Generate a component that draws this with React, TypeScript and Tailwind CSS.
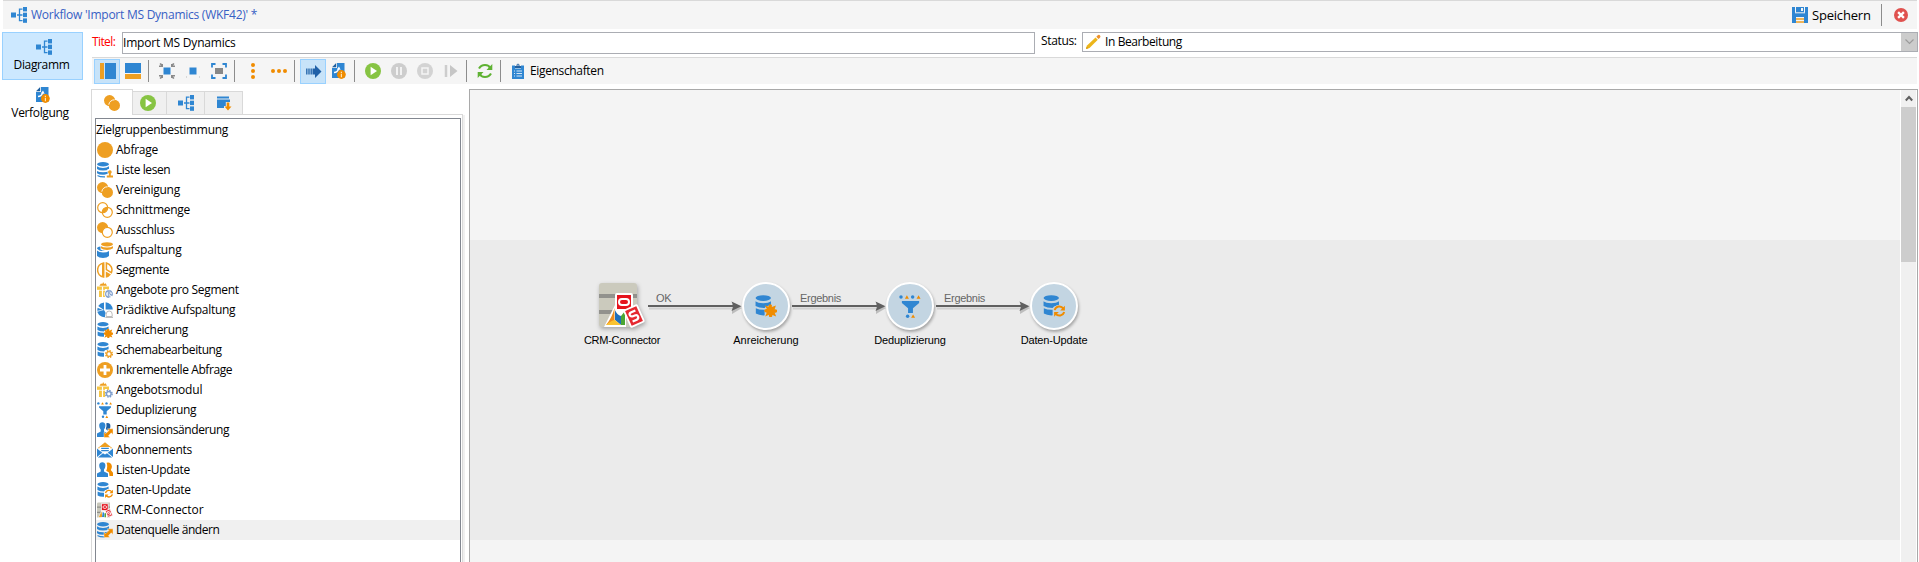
import type { ReactNode } from "react";

const B = "#2f86d2";
const O = "#ee9f22";
const D = "#f08c00";

function Svg({ children, size = 16, className = "" }: { children: ReactNode; size?: number; className?: string }) {
  return (
    <svg width={size} height={size} viewBox="0 0 16 16" fill="none" className={"shrink-0 " + className}>
      {children}
    </svg>
  );
}

const Db = () => (
  <g fill={B}>
    <ellipse cx="6" cy="2.3" rx="6" ry="2.2" />
    <path d="M0 4.300Q2 6 6 6T12 4.300V7Q10 8.600 6 8.600T0 7Z" />
    <path d="M0 8.900Q2 10.300 6 10.300T12 8.900V11.200Q10 12.700 6 12.700T0 11.200Z" />
    <path d="M.5 13.100Q3 14.400 8 14.300V15.600Q3 15.800.5 14.300Z" />
  </g>
);
const DbSmall = () => (
  <g fill={B}>
    <ellipse cx="6" cy="2.200" rx="5.600" ry="2.100" />
    <path d="M.4 4.600Q2 6 6 6T11.600 4.600V7.300L8 8.300 7 9.500Q3 9.500.4 8Z" />
    <path d="M.6 9.600Q3 10.900 7 10.800V14.800Q3 15 .6 13.500Z" />
  </g>
);
const Org = () => (
  <g fill={B}>
    <rect x="0" y="5.5" width="5" height="5" />
    <rect x="12" y="0" width="4" height="4.4" />
    <rect x="12" y="5.7" width="4" height="4.4" />
    <rect x="12" y="11.4" width="4" height="4.4" />
    <path d="M6 8H11.500M11.500 2.200H8.500V13.600H11.500" stroke={B} strokeWidth="1.300" fill="none" />
  </g>
);
const Gear = ({ color = O, x = 12, y = 12 }: { color?: string; x?: number; y?: number }) => (
  <g>
    <circle cx={x} cy={y} r="3.3" stroke={color} strokeWidth="1.5" strokeDasharray="1.5 1.09" fill="#fff" />
    <circle cx={x} cy={y} r="2.3" stroke={color} strokeWidth="1.3" fill="#fff" />
  </g>
);
const Person = () => (
  <path d="M2.2 3.3C2.2 1 3.6.2 5.3.2S8.4 1 8.4 3.3C8.4 5.5 7.6 6.8 7 7.6V9.6L11 11.6V15H0V11.6L3.7 9.6V7.6C3 6.8 2.2 5.5 2.2 3.3Z" fill={B} />
);
const Swap = () => (
  <path d="M10.300 6.800H16V12.500L14.300 10.800 11.400 13.700 13 15.500H7V9.900L8.800 11.600 11.900 8.500Z" fill={D} stroke="#fff" strokeWidth=".4" />
);
const Gift = () => (
  <g>
    <path d="M0 4.6H12V8H10V7H8V15H2V8H0Z" fill="#f6c544" />
    <path d="M5.5 4.6V15" stroke="#fff" strokeWidth="1.2" />
    <path d="M2.3 3.8L4 1.4 5.2 2 6.2 0 7.2 2 8.6 1.2 10 3.8Z" fill={O} />
    <path d="M0 8.3H12" stroke="#fff" strokeWidth=".8" />
  </g>
);
const Refresh = ({ bg = "#fff" }: { bg?: string }) => (
  <g stroke={D} strokeWidth="1.4">
    <circle cx="12" cy="11.700" r="4.700" fill={bg} stroke="none" />
    <path d="M8.500 11A3.500 3.500 0 0 1 14.800 9.900M15.400 12.400A3.500 3.500 0 0 1 9.200 13.500" />
    <path d="M15.900 7.800V11.300H12.500ZM8.100 15.900V12.400H11.500Z" fill={D} stroke="none" />
  </g>
);
const Puzzle = () => (
  <path d="M7.200 7.400L9.900 8.600Q9.600 6.600 11.200 6.700T12.200 8.800L15.200 7.600 14.300 10.300Q16.200 10.200 16.100 11.700T14.300 12.900L15.400 15.600 12.700 14.600Q12.600 16.300 11.200 16.200T10.200 14.400L7.400 15.700 8.500 12.900Q6.600 12.800 6.700 11.400T8.600 10.200Z" fill={D} />
);
const Funnel = () => (
  <g fill={B}>
    <circle cx="1.4" cy="1.4" r="1.2" />
    <circle cx="9.5" cy="1.4" r="1.2" />
    <path d="M4.1 2.6L5.5.2 6.9 2.6ZM12.2 2.6L13.6.2 15 2.6ZM8.4 15.9L9.8 13.5 11.2 15.9Z" fill={D} />
    <path d="M2 4.2H14V5.6L9.7 9.2V12.6H6.3V9.2L2 5.6Z" />
    <circle cx="6" cy="14.8" r="1.2" />
  </g>
);
const Crm = () => (
  <g>
    <path d="M0 1.6Q0 .4 1.2.4H13V15.4H0Z" fill="#c9c8bb" />
    <path d="M0 4.6H13V5.8H0ZM0 9.8H13V11H0Z" fill="#8f8f8a" />
    <path d="M1.200 15.800L4.800 7.800 10 9.500V15.800Z" fill="#fff" />
    <path d="M1.800 15.200L4.600 9.200 5.200 15Z" fill={O} />
    <path d="M5 15L5.800 9.500 7.400 11.500V15Z" fill={B} />
    <path d="M7.600 15.200V12L9 10.500V15.200Z" fill="#5ba832" />
    <rect x="4.500" y="1.800" width="6.600" height="6.600" fill="#e3121c" stroke="#fff" strokeWidth=".7" />
    <rect x="6.100" y="3.800" width="3.400" height="2.500" rx="1" stroke="#fff" strokeWidth=".9" />
    <g transform="rotate(-22 12 11)">
      <rect x="9.500" y="7.600" width="5" height="7" fill="#e3252c" stroke="#fff" strokeWidth=".7" />
      <path d="M13.500 9.400H10.900V11.100H13.200V12.900H10.500" stroke="#fff" strokeWidth=".9" />
    </g>
  </g>
);
const DocInfo = () => (
  <g>
    <path d="M5 0H12.500V15H0V5H5Z" fill={B} />
    <path d="M0 4.200L4.200 0V4.200Z" fill="#1e5f9f" />
    <path d="M2 9.500Q5.500 9.500 6.500 6" stroke="#fff" strokeWidth="1.300" />
    <path d="M4.800 6.400L7 3.400 8.600 6.700Z" fill="#fff" />
    <circle cx="9.400" cy="11.500" r="4.400" fill={D} />
    <path d="M9.400 8.700V9.900M9.400 10.800V14.200" stroke="#ffe3b3" strokeWidth="1.200" />
  </g>
);
const Union = () => (
  <g>
    <circle cx="5.6" cy="5.6" r="5.6" fill={O} />
    <circle cx="10.4" cy="10.4" r="5.6" fill={O} />
    <path d="M4.8 9.7A5.6 5.6 0 0 1 10.6 4.8" stroke="#fff" strokeWidth=".9" />
  </g>
);
const Play = () => (
  <g>
    <circle cx="8" cy="8" r="8" fill="#87c443" />
    <path d="M5.6 3.8L12 8 5.6 12.2Z" fill="#fff" />
  </g>
);

const ITEMS: { label: string; icon: ReactNode; track: string }[] = [
  { label: "Abfrage", track: "tracking-[-0.25px]", icon: <circle cx="8" cy="8" r="8" fill={O} /> },
  {
    label: "Liste lesen",
    track: "tracking-[-0.4px]",
    icon: (
      <g>
        <Db />
        <path d="M8.6 16V12.2H10.6V7H16V16Z" fill="#fff" />
        <path d="M12.8 8.2A1.9 1.9 0 0 1 13.8 11.7V13.4H16V15.4H9.8V13.4H11.9V11.7A1.9 1.9 0 0 1 12.8 8.2Z" fill={O} />
      </g>
    ),
  },
  { label: "Vereinigung", track: "tracking-[-0.25px]", icon: <Union /> },
  {
    label: "Schnittmenge",
    track: "tracking-[-0.25px]",
    icon: (
      <g>
        <path d="M5.2 10.6A5.2 5.2 0 0 1 10.6 5.2 5.2 5.2 0 0 1 5.2 10.6Z" fill={O} />
        <circle cx="5.7" cy="5.7" r="5" stroke={O} strokeWidth="1.2" />
        <circle cx="10.3" cy="10.3" r="5" stroke={O} strokeWidth="1.2" />
      </g>
    ),
  },
  {
    label: "Ausschluss",
    track: "tracking-[-0.3px]",
    icon: (
      <g>
        <circle cx="5.6" cy="5.6" r="5.6" fill={O} />
        <circle cx="10.3" cy="10.3" r="5" stroke={O} strokeWidth="1.2" fill="#fff" />
      </g>
    ),
  },
  {
    label: "Aufspaltung",
    track: "tracking-[-0.15px]",
    icon: (
      <g>
        <path d="M0 8.500Q2 10.500 6 10.500T12 9V14Q10 16 6 16T0 14Z" fill={B} />
        <path d="M0 6.500Q0 5 3.500 4.600V7.400Q5 8.600 8 9Q2 9.500 0 6.500Z" fill={B} />
        <ellipse cx="10" cy="2.300" rx="6" ry="2.100" fill={O} />
        <path d="M4 4.200Q6 5.600 10 5.600T16 4.200V6.200Q14 7.900 10 7.900T4 6.200Z" fill={O} />
      </g>
    ),
  },
  {
    label: "Segmente",
    track: "tracking-[-0.35px]",
    icon: (
      <g>
        <path d="M6.600.9A7.200 7.200 0 0 0 6.600 15.100Z" stroke={O} strokeWidth="1.500" />
        <path d="M5 1.500H7.200V14.500H5Z" fill={O} />
        <path d="M9.400.9A7.200 7.200 0 0 1 14.400 10.600L9.400 7.600Z" stroke={O} strokeWidth="1.500" />
        <path d="M8.800 9.400L14 12.500Q12 15.200 8.800 15.800Z" fill={O} />
      </g>
    ),
  },
  {
    label: "Angebote pro Segment",
    track: "tracking-[-0.3px]",
    icon: (
      <g>
        <Gift />
        <circle cx="11.8" cy="12" r="4.6" fill="#fff" />
        <path d="M11.3 8.6A3.5 3.5 0 0 0 11.3 15.4ZM12.8 8.6A3.5 3.5 0 0 1 15 13.4L12.8 12ZM12.8 13.4V15.5" stroke="#7d9dcc" strokeWidth="1.1" />
      </g>
    ),
  },
  {
    label: "Prädiktive Aufspaltung",
    track: "tracking-[-0.3px]",
    icon: (
      <g>
        <path d="M7 .4V8L11 14.4A7.8 7.8 0 0 1 .2 9.8L7 8 1.2 4A8 8 0 0 1 7 .4Z" fill={B} />
        <path d="M.6 5.800L5.800 8 .2 8.800Z" fill={B} />
        <path d="M8.6.3A7.8 7.8 0 0 1 15.8 7.6H8.6Z" fill={B} />
        <path d="M8 16V13.5L9 9.5 12.5 8 16 10V16Z" fill="#fff" />
        <path d="M9.2 14.5V12.2A3 3.2 0 0 1 15.2 12.2V14.5ZM8.4 15.5H16" stroke="#b5b5b5" strokeWidth=".9" />
      </g>
    ),
  },
  { label: "Anreicherung", track: "tracking-[-0.3px]", icon: <g><DbSmall /><Puzzle /></g> },
  { label: "Schemabearbeitung", track: "tracking-[-0.4px]", icon: <g><DbSmall /><Gear /></g> },
  {
    label: "Inkrementelle Abfrage",
    track: "tracking-[-0.4px]",
    icon: (
      <g>
        <circle cx="8" cy="8" r="8" fill={O} />
        <path d="M8 3V13M3 8H13" stroke="#fff" strokeWidth="2.8" />
      </g>
    ),
  },
  { label: "Angebotsmodul", track: "tracking-[-0.2px]", icon: <g><Gift /><Gear color="#7d9dcc" x={11.8} y={11.8} /></g> },
  { label: "Deduplizierung", track: "tracking-[-0.35px]", icon: <Funnel /> },
  {
    label: "Dimensionsänderung",
    track: "tracking-[-0.4px]",
    icon: (
      <g>
        <Person />
        <path d="M9.3 1.2Q13.5.4 13.4 4.2 13.4 6 12.4 7.2L10.5 8.4 8.8 7Q10 4 9.3 1.2Z" fill="#1e5fa3" />
        <Swap />
      </g>
    ),
  },
  {
    label: "Abonnements",
    track: "tracking-[-0.25px]",
    icon: (
      <g>
        <path d="M.6 6.2L8 .2 15.4 6.2Z" fill={O} />
        <path d="M2.6 5H13.4V10L8 13 2.6 10Z" fill="#fff" />
        <path d="M0 6.6L5.3 10.8 0 15ZM16 6.6L10.7 10.8 16 15Z" fill={B} />
        <path d="M.8 15.6L6 11.2 8 12.5 10 11.2 15.2 15.6Z" fill={B} />
        <path d="M4.2 6.4H11.8M4.2 8.6H11.8" stroke={B} strokeWidth="1.1" />
      </g>
    ),
  },
  {
    label: "Listen-Update",
    track: "tracking-[-0.35px]",
    icon: (
      <g>
        <Person />
        <path d="M9.6.8Q14-.2 14.9 4.2 14.9 6.5 13.8 8L16 10.8V14H12.5L12 10.6 9.2 8.8Q11 4.8 9.6.8Z" fill={D} />
      </g>
    ),
  },
  { label: "Daten-Update", track: "tracking-[-0.35px]", icon: <g><DbSmall /><Refresh /></g> },
  { label: "CRM-Connector", track: "tracking-[-0.03px]", icon: <Crm /> },
  { label: "Datenquelle ändern", track: "tracking-[-0.45px]", icon: <g><Db /><Swap /></g> },
];

function Sep({ className = "" }: { className?: string }) {
  return <div className={"h-[22px] w-px shrink-0 bg-[#8c8c8c] " + className} />;
}

function Node({ className, label, track, children }: { className: string; label: string; track: string; children: ReactNode }) {
  return (
    <div className={"absolute flex w-[120px] flex-col items-center " + className}>
      <div className="flex size-[48px] items-center justify-center rounded-full border-2 border-white bg-[#c3d5e2] shadow-[1px_2px_3px_rgba(0,0,0,0.3)]">
        {children}
      </div>
      <span className={"mt-[3px] font-['Liberation_Sans',Arial,sans-serif] text-[11px] leading-[14px] text-black " + track}>{label}</span>
    </div>
  );
}

function Link({ className, label }: { className: string; label: string }) {
  return (
    <div className={"absolute w-[94px] " + className}>
      <span className="block h-[14px] pl-[8px] font-['Liberation_Sans',Arial,sans-serif] text-[11px] leading-[14px] tracking-[-0.3px] text-[#666]">{label}</span>
      <svg width="94" height="14" viewBox="0 0 94 14" className="-mt-[5px] block">
        <path d="M1 8.500H84" stroke="#d0d0d0" strokeWidth="2" />
        <path d="M84 3.500L94 8 84 14Z" fill="#bdbdbd" />
        <path d="M0 6H86" stroke="#606060" strokeWidth="2" />
        <path d="M83.500 1.500L93.500 6.200L83.500 11L85.500 6.200Z" fill="#606060" />
      </svg>
    </div>
  );
}

export default function App() {
  return (
    <div className="flex h-[562px] w-[1919px] flex-col overflow-hidden bg-white font-['Open_Sans','Noto_Sans',sans-serif] text-[12px] leading-[16px] tracking-[-0.1px] text-black">
      <header className="ml-[3px] mr-[2px] flex h-[29px] shrink-0 items-center border-t border-[#d9d9d9] bg-[#f5f5f5]">
        <Svg className="ml-[8px]"><Org /></Svg>
        <span className="ml-[4px] tracking-[-0.25px] text-[#3760c4]">Workflow 'Import MS Dynamics (WKF42)' *</span>
        <div className="ml-auto flex items-center">
          <Svg>
            <path d="M0 0H16V16H0Z" fill={B} />
            <path d="M4 10H12V16H4Z" fill="#f5f5f5" />
            <path d="M3.500 0V5.500M12.500 0V5.500M3 5.800H13" stroke="#f5f5f5" />
            <path d="M9 1H11V4H9Z" fill="#f5f5f5" />
            <path d="M4 12H12M4 15H12" stroke={O} strokeWidth="1.600" />
          </Svg>
          <span className="ml-[4px] w-[60px] text-[13px] tracking-[-0.2px]">Speichern</span>
          <Sep className="ml-[9px]" />
          <Svg size={14} className="ml-[12px] mr-[9px]">
            <circle cx="8" cy="8" r="8" fill="#e0524f" />
            <path d="M4.700 4.700L11.300 11.300M11.300 4.700L4.700 11.300" stroke="#fff" strokeWidth="2.600" />
          </Svg>
        </div>
      </header>
      <div className="flex min-h-0 flex-1">
        <nav className="flex w-[91px] shrink-0 flex-col pl-[2px] pt-[3px] tracking-[-0.35px]">
          <div className="flex h-[48px] w-[81px] flex-col items-center border border-[#99d1ff] bg-[#cce8ff]">
            <Svg className="ml-[3px] mt-[6px]"><Org /></Svg>
            <span className="mr-[2px] mt-[2px]">Diagramm</span>
          </div>
          <div className="flex h-[46px] w-[81px] flex-col items-center">
            <Svg className="ml-[2px] mt-[7px]"><DocInfo /></Svg>
            <span className="mr-[5px] mt-[2px]">Verfolgung</span>
          </div>
        </nav>
        <main className="flex min-w-0 flex-1 flex-col">
          <div className="flex h-[28px] shrink-0 pt-[3px]">
            <span className="w-[31px] pl-px pt-[2px] tracking-[-0.6px] text-[#f00]">Titel:</span>
            <div className="flex h-[22px] w-[913px] items-center border border-[#abadb3] pb-px tracking-[-0.2px]">Import MS Dynamics</div>
            <span className="w-[47px] pl-[6px] pt-px tracking-[-0.35px]">Status:</span>
            <div className="flex h-[20px] w-[836px] items-center border border-[#abadb3]">
              <Svg className="ml-[2px]">
                <path d="M1 15L2 11.500 10.500 3.500 12.800 5.800 4.500 14Z" fill="#ecb51a" />
                <path d="M11.300 2.800L12.500 1.500Q14-.2 15 1.500 16 2.700 14.700 3.900L13.500 5Z" fill="#ee9028" />
                <path d="M1 15L1.600 12.600 3.400 14.300Z" fill="#d89a10" />
              </Svg>
              <span className="ml-[4px] tracking-[-0.4px]">In Bearbeitung</span>
              <div className="ml-auto flex h-[18px] w-[16px] items-center justify-center bg-[#ccc]">
                <svg width="9" height="6" viewBox="0 0 9 6" fill="none"><path d="M.5.5L4.500 4.500 8.500.5" stroke="#9b9b9b" strokeWidth="1.200" /></svg>
              </div>
            </div>
          </div>
          <div className="ml-px mr-[2px] flex h-[27px] shrink-0 items-center border-t border-[#d9d9d9] bg-[#f5f5f5]">
            <div className="ml-[2px] flex h-[25px] w-[26px] items-center justify-center border border-[#99d1ff] bg-[#c7e3f9]">
              <Svg className="ml-px"><path d="M0 0H4V16H0Z" fill={O} /><path d="M5 0H16V16H5Z" fill={B} /></Svg>
            </div>
            <Svg className="ml-[5px]"><path d="M0 0H16V10H0Z" fill={B} /><path d="M0 11H16V16H0Z" fill={O} /></Svg>
            <Sep className="ml-[7px]" />
            <Svg className="ml-[10px]">
              <path d="M4.500 4.500H11.500V11.500H4.500Z" fill={B} />
              <path d="M4 1V4H0V2.500H2L.5 1 1.500 0 3 1ZM12 1V4H16V2.500H14L15.500 1 14.500 0 13 1ZM4 15V12H0V13.500H2L.5 15 1.500 16 3 15ZM12 15V12H16V13.500H14L15.500 15 14.500 16 13 15Z" fill="#8a8a8a" />
            </Svg>
            <Svg className="ml-[10px]"><path d="M4.500 4.500H11.500V11.500H4.500Z" fill={B} /><path d="M1 14H2M14 14H15" stroke="#bbb" /></Svg>
            <Svg className="ml-[10px]">
              <path d="M4 5H12V11H4Z" fill="#888" />
              <path d="M4.500 1H1V4.500M11.500 1H15V4.500M4.500 15H1V11.500M11.500 15H15V11.500" stroke={B} strokeWidth="1.800" />
            </Svg>
            <Sep className="ml-[7px]" />
            <Svg className="ml-[10px]"><g fill={D}><circle cx="8" cy="2" r="2" /><circle cx="8" cy="8" r="2" /><circle cx="8" cy="14" r="2" /></g></Svg>
            <Svg className="ml-[10px]"><g fill={D}><circle cx="2" cy="8" r="2" /><circle cx="8" cy="8" r="2" /><circle cx="14" cy="8" r="2" /></g></Svg>
            <Sep className="ml-[7px]" />
            <div className="ml-[5px] flex h-[25px] w-[26px] items-center justify-center border border-[#99d1ff] bg-[#c7e3f9]">
              <Svg className="ml-[2px]"><path d="M.8 5.500V11.500M3 5.500V11.500M5.200 5.500V11.500" stroke="#2869ad" strokeWidth="1.400" /><path d="M6.500 5.500H9V2L15.500 8.500 9 15V11.500H6.500Z" fill="#2161a8" /></Svg>
            </div>
            <Svg className="ml-[6px]"><DocInfo /></Svg>
            <Sep className="ml-[6px]" />
            <Svg className="ml-[10px]"><Play /></Svg>
            <Svg className="ml-[10px]"><circle cx="8" cy="8" r="8" fill="#cdcdcd" /><path d="M6 4V12M10 4V12" stroke="#f2f2f2" strokeWidth="2" /></Svg>
            <Svg className="ml-[10px]"><circle cx="8" cy="8" r="8" fill="#d3d3d3" /><path d="M5 5H11V11H5Z" stroke="#f5f5f5" strokeWidth="1.500" /></Svg>
            <Svg className="ml-[10px]"><path d="M3 2V14" stroke="#cdcdcd" strokeWidth="2.500" /><path d="M7 2L14.500 8 7 14Z" fill="#c6c6c6" /></Svg>
            <Sep className="ml-[7px]" />
            <Svg className="ml-[10px]">
              <path d="M2 5.500Q4 2 8 2T13 5M14 10.500Q12 14 8 14T3 11" stroke="#5fb233" strokeWidth="2.100" />
              <path d="M15.300 1V7H9.500ZM.7 15V9H6.500Z" fill="#5fb233" />
            </Svg>
            <Sep className="ml-[7px]" />
            <Svg className="ml-[9px]">
              <path d="M2 2.500H5V5.500H11V2.500H14V16H2Z" fill={B} />
              <path d="M5 3H6.500V1.800L8 .4 9.500 1.800V3H11V5H5Z" fill="#24609f" />
              <path d="M7.400 2.200H8.600" stroke="#fff" />
              <path d="M4 8H5M6.500 8H12M4 10.500H5M6.500 10.500H12M4 13H5M6.500 13H12" stroke="#fff" strokeWidth=".8" />
            </Svg>
            <span className="ml-[4px] tracking-[-0.35px]">Eigenschaften</span>
          </div>
          <div className="flex min-h-0 flex-1 pt-[5px]">
            <section className="flex w-[374px] shrink-0 flex-col">
              <div className="flex h-[26px] shrink-0 items-end">
                <div className="flex h-[26px] w-[42px] items-center justify-center border-x border-t border-[#d9d9d9] bg-white"><Svg className="mt-px"><Union /></Svg></div>
                <div className="flex h-[24px] w-[34px] items-center justify-center border-y border-r border-[#d9d9d9] bg-[#f0f0f0]"><Svg className="mr-[4px]"><Play /></Svg></div>
                <div className="flex h-[24px] w-[38px] items-center justify-center border-y border-r border-[#d9d9d9] bg-[#f0f0f0]"><Svg><Org /></Svg></div>
                <div className="flex h-[24px] w-[38px] items-center justify-center border-y border-r border-[#d9d9d9] bg-[#f0f0f0]">
                  <Svg>
                    <path d="M1 1.500H13V3.500H1ZM1 4.500H14V7H9.800V11H8V13H1Z" fill={B} />
                    <path d="M10.700 7.500H13.300V11.500H15.500L12 15.500 8.500 11.500H10.700Z" fill={D} />
                  </Svg>
                </div>
                <div className="h-px flex-1 bg-[#d9d9d9]" />
                <div className="w-[2px]" />
              </div>
              <div className="flex min-h-0 flex-1 border-l border-[#d9d9d9]">
                <div className="flex min-w-0 flex-1 border-r border-[#d9d9d9] pl-[3px] pr-px pt-[3px]">
                  <div className="flex-1 border-x border-t border-[#828790] pt-px">
                    <div className="flex h-[20px] items-center tracking-[-0.27px]">Zielgruppenbestimmung</div>
                    {ITEMS.map((it) => (
                      <div key={it.label} className={"flex h-[20px] items-center gap-[3px] pl-px " + (it.label === "Datenquelle ändern" ? "bg-[#f0f0f0]" : "")}>
                        <Svg>{it.icon}</Svg>
                        <span className={"whitespace-nowrap " + it.track}>{it.label}</span>
                      </div>
                    ))}
                  </div>
                </div>
                <div className="w-[2px] bg-[#f0f0f0]" />
              </div>
            </section>
            <section className="ml-[4px] mr-px flex min-w-0 flex-1 border-x border-t border-[#a9a9a9]">
              <div className="relative flex min-w-0 flex-1 flex-col bg-[#f4f4f4]">
                <div className="mt-[150px] h-[300px] bg-[#ebebeb]" />
                <div className="absolute left-[92px] top-[193px] flex w-[120px] flex-col items-center">
                  <svg width="50" height="48" viewBox="0 0 50 48" fill="none" className="drop-shadow-[1px_2px_2px_rgba(0,0,0,0.3)]">
                    <path d="M2 3Q2 0 5 0H37Q40 0 40 3V41Q40 44 37 44H5Q2 44 2 41Z" fill="#cbcabd" />
                    <path d="M2 11H40V15H2ZM2 27H40V31H2Z" fill="#92928d" />
                    <path d="M7 44L18 22 29 28V44Z" fill="#fff" />
                    <path d="M9 42Q15 35 17.500 25V38Z" fill="#ef8d1e" />
                    <path d="M18 37V27Q20 32 24 33V42Z" fill="#1f6fbd" />
                    <path d="M9 42Q15 37 18 37L24 42Z" fill="#fac330" />
                    <path d="M24 42V33L28 28V42Z" fill="#4ba634" />
                    <rect x="19" y="11" width="16" height="16" rx="1" fill="#e5141d" stroke="#fff" strokeWidth="2" />
                    <rect x="22" y="16" width="10" height="6" rx="3" stroke="#fff" strokeWidth="2" />
                    <g transform="rotate(-24 37 33)">
                      <rect x="30" y="24" width="14" height="18" rx="1" fill="#e52830" stroke="#fff" strokeWidth="1.800" />
                      <path d="M40.500 28.500H36Q33.500 28.500 33.500 30.500T36 32.800H38Q40.500 32.800 40.500 35T38 37.500H33.500" stroke="#fff" strokeWidth="2.200" />
                    </g>
                  </svg>
                  <span className="mt-[2px] font-['Liberation_Sans',Arial,sans-serif] text-[11px] leading-[14px] tracking-[-0.25px]">CRM-Connector</span>
                </div>
                <Link className="left-[178px] top-[201px]" label="OK" />
                <Node className="left-[236px] top-[192px]" label="Anreicherung" track="tracking-[0px]"><Svg size={22}><DbSmall /><Puzzle /></Svg></Node>
                <Link className="left-[322px] top-[201px]" label="Ergebnis" />
                <Node className="left-[380px] top-[192px]" label="Deduplizierung" track="tracking-[-0.12px]"><Svg size={23}><Funnel /></Svg></Node>
                <Link className="left-[466px] top-[201px]" label="Ergebnis" />
                <Node className="left-[524px] top-[192px]" label="Daten-Update" track="tracking-[-0.15px]"><Svg size={22}><DbSmall /><Refresh bg="#c3d5e2" /></Svg></Node>
              </div>
              <div className="flex w-[17px] shrink-0 flex-col border-x border-white bg-[#f0f0f0]">
                <div className="flex h-[17px] items-center justify-center">
                  <svg width="8" height="7" viewBox="0 0 8 7" fill="none"><path d="M.8 5.500L4 2 7.200 5.500" stroke="#606060" strokeWidth="2" /></svg>
                </div>
                <div className="h-[155px] bg-[#cdcdcd]" />
              </div>
            </section>
          </div>
        </main>
      </div>
    </div>
  );
}
